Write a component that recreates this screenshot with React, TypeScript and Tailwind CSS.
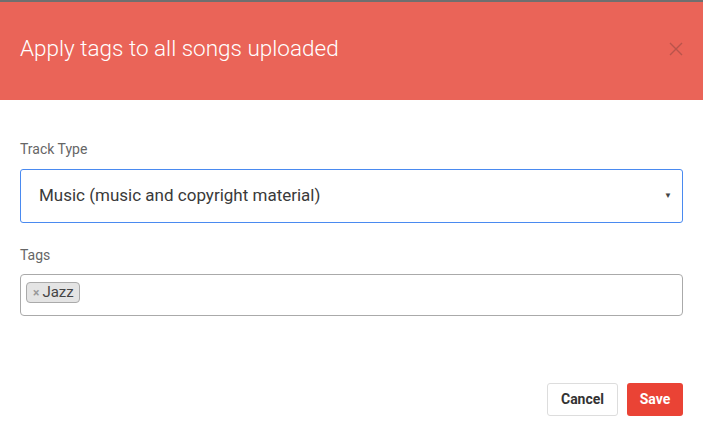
import { useState } from "react";

export default function App() {
  const [tags, setTags] = useState<string[]>(["Jazz"]);

  return (
    <div className="h-[438px] w-[703px] overflow-hidden bg-white font-['Roboto',sans-serif]">
      <div className="h-[2px] bg-[#6f6f6f]" />
      <div className="flex h-[98px] items-center justify-between bg-[#ea6458] pb-[5px] pl-5 pr-[20px]">
        <h1 className="text-[22.5px] font-light leading-none text-white">Apply tags to all songs uploaded</h1>
        <button type="button" className="text-[#b9544b]">
          <svg width="14" height="14" viewBox="0 0 14 14" fill="none" stroke="currentColor" strokeWidth="1.4">
            <path d="M1 1l12 12M13 1L1 13" />
          </svg>
        </button>
      </div>

      <div className="px-5 pt-[41px]">
        <label className="block text-[14px] leading-[16px] text-[#666]">Track Type</label>
        <div className="mt-[12px] flex h-[54px] items-center justify-between rounded-[3px] border border-[#4a8af0] pl-[18px] pr-[10px]">
          <span className="text-[17px] text-[#3a3a3a]">Music (music and copyright material)</span>
          <span className="text-[8px] text-[#444]">▼</span>
        </div>

        <label className="mt-[24px] block text-[14px] leading-[16px] text-[#666]">Tags</label>
        <div className="mt-[11px] flex h-[42px] items-start rounded-[4px] border border-[#aaa] px-[5px] pt-[7px]">
          {tags.map((t) => (
            <span
              key={t}
              className="flex h-[21px] items-center gap-[3px] rounded-[4px] border border-[#aaa] bg-[#e4e4e4] pl-[6px] pr-[5px] text-[15px] text-[#444]"
            >
              <button
                type="button"
                onClick={() => setTags(tags.filter((x) => x !== t))}
                className="text-[12px] font-bold leading-none text-[#999]"
              >
                ×
              </button>
              {t}
            </span>
          ))}
        </div>

        <div className="mt-[67px] flex justify-end gap-[9px]">
          <button
            type="button"
            className="h-[33px] w-[71px] rounded-[3px] border border-[#ddd] bg-white text-[14px] font-bold text-[#333]"
          >
            Cancel
          </button>
          <button
            type="button"
            className="h-[33px] w-[56px] rounded-[3px] bg-[#ea4335] text-[14px] font-bold text-white"
          >
            Save
          </button>
        </div>
      </div>
    </div>
  );
}
